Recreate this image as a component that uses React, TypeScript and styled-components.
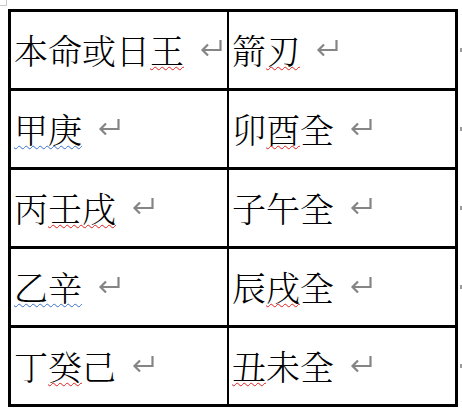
import React from 'react'
import styled, { createGlobalStyle } from 'styled-components'

const GlobalStyle = createGlobalStyle`
  html, body {
    margin: 0;
    background: #ffffff;
  }
`

const Page = styled.div`
  position: relative;
  padding: 9px 0 0 8px;
  font-family: "Noto Serif CJK TC", "Noto Sans CJK TC", "Liberation Serif", serif;
`

const CornerMark = styled.div`
  position: absolute;
  top: 0;
  left: 0;
  width: 6px;
  height: 5px;
  border-right: 1px solid #c8c8c8;
  border-bottom: 1px solid #c8c8c8;
`

const Table = styled.div`
  width: 450px;
  box-sizing: border-box;
  border: 3px solid #000;
  display: flex;
  flex-direction: column;
`

const Row = styled.div<{ $first?: boolean }>`
  position: relative;
  display: flex;
  height: 76px;
  border-top: ${({ $first }) => ($first ? 'none' : '3px solid #000')};

  &::after {
    content: '';
    position: absolute;
    right: -7px;
    top: 50%;
    width: 2px;
    height: 4px;
    margin-top: -2px;
    background: #9a9a9a;
  }
`

const Cell = styled.div<{ $left?: boolean }>`
  display: flex;
  align-items: center;
  box-sizing: border-box;
  padding-left: 3px;
  width: ${({ $left }) => ($left ? '218px' : 'auto')};
  flex: ${({ $left }) => ($left ? '0 0 218px' : '1')};
  border-right: ${({ $left }) => ($left ? '2px solid #000' : 'none')};
`

const Text = styled.span`
  font-size: 34px;
  line-height: 1;
  font-weight: 300;
  color: #000;
  white-space: nowrap;
`

const Squiggle = styled.span<{ $tone: 'red' | 'blue' }>`
  text-decoration-line: underline;
  text-decoration-style: wavy;
  text-decoration-color: ${({ $tone }) => ($tone === 'red' ? '#e0211d' : '#3a6fd0')};
  text-decoration-thickness: 1.4px;
  text-underline-offset: 2px;
`

const Mark = styled.svg`
  display: block;
  flex: 0 0 auto;
  width: 22px;
  height: 17px;
  margin-left: 16px;
  transform: translateY(-3px);
`

function ReturnMark() {
  return (
    <Mark width="22" height="17" viewBox="0 0 22 17">
      <path d="M20.5 1 V11 H2.5" fill="none" stroke="#858585" strokeWidth="2.2" />
      <path d="M8 5.5 L2.5 11 L8 16.5" fill="none" stroke="#858585" strokeWidth="2.2" />
    </Mark>
  )
}

type Part = { t: string; s?: 'red' | 'blue' }

const rows: Part[][][] = [
  [
    [{ t: '本命或日' }, { t: '王', s: 'red' }],
    [{ t: '箭' }, { t: '刃', s: 'red' }],
  ],
  [
    [{ t: '甲庚', s: 'blue' }],
    [{ t: '卯' }, { t: '酉', s: 'red' }, { t: '全' }],
  ],
  [
    [{ t: '丙' }, { t: '壬戌', s: 'red' }],
    [{ t: '子午全' }],
  ],
  [
    [{ t: '乙辛', s: 'blue' }],
    [{ t: '辰' }, { t: '戌', s: 'red' }, { t: '全' }],
  ],
  [
    [{ t: '丁' }, { t: '癸', s: 'red' }, { t: '己' }],
    [{ t: '丑', s: 'red' }, { t: '未全' }],
  ],
]

function CellText({ parts }: { parts: Part[] }) {
  return (
    <>
      <Text>
        {parts.map((p, i) =>
          p.s ? (
            <Squiggle key={i} $tone={p.s}>
              {p.t}
            </Squiggle>
          ) : (
            <React.Fragment key={i}>{p.t}</React.Fragment>
          )
        )}
      </Text>
      <ReturnMark />
    </>
  )
}

export default function App() {
  return (
    <>
      <GlobalStyle />
      <Page>
        <CornerMark />
        <Table>
          {rows.map((row, i) => (
            <Row key={i} $first={i === 0}>
              <Cell $left>
                <CellText parts={row[0]} />
              </Cell>
              <Cell>
                <CellText parts={row[1]} />
              </Cell>
            </Row>
          ))}
        </Table>
      </Page>
    </>
  )
}
